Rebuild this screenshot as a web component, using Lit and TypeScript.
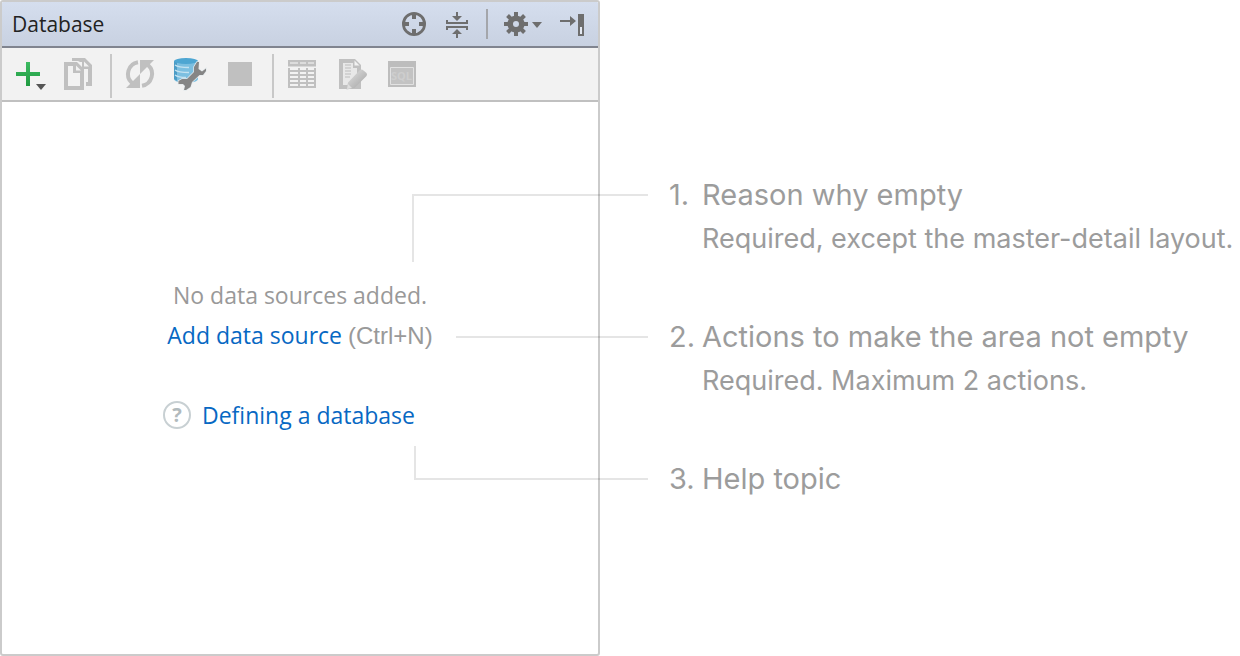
import { LitElement, html, css, svg } from "lit";
import { customElement } from "lit/decorators.js";

const gearTeeth = [0, 45, 90, 135, 180, 225, 270, 315];

const icons = {
  locate: html`<svg width="28" height="28" viewBox="0 0 28 28" aria-hidden="true">
    <circle cx="14" cy="14" r="10.6" fill="none" stroke="#6e6e6e" stroke-width="2.8" />
    <path d="M12 3h4v6h-4zM12 19h4v6h-4zM3 12h6v4H3zM19 12h6v4h-6z" fill="#6e6e6e" />
  </svg>`,
  collapse: html`<svg width="28" height="28" viewBox="0 0 28 28" aria-hidden="true">
    <path
      d="M13 2h2v4h4l-5 5-5-5h4zM3 10h2v2h18v-2h2v4H3zM3 16h22v4h-2v-2H5v2H3zM14 19l5 5h-4v4h-2v-4H9z"
      fill="#6e6e6e"
    />
  </svg>`,
  gear: html`<svg width="40" height="28" viewBox="0 0 40 28" aria-hidden="true">
    ${gearTeeth.map(
      (a) => svg`<path d="M11 2h4v6h-4z" fill="#6e6e6e" transform="rotate(${a} 13 14)" />`
    )}
    <circle cx="13" cy="14" r="5.8" fill="none" stroke="#6e6e6e" stroke-width="5.6" />
    <path d="M29 12h10l-5 6z" fill="#6e6e6e" />
  </svg>`,
  hide: html`<svg width="28" height="28" viewBox="0 0 28 28" aria-hidden="true">
    <path d="M2 10h10V6l6 5-6 5v-4H2z" fill="#6e6e6e" />
    <path d="M20 4h6v22h-6z" fill="#6e6e6e" />
    <path d="M22 17h2v7h-2z" fill="#e4e9f2" />
  </svg>`,
  add: html`<svg width="32" height="32" viewBox="0 0 32 32" aria-hidden="true">
    <defs>
      <linearGradient id="plus" x1="0" y1="0" x2="0" y2="1">
        <stop offset="0" stop-color="#3dbb62" />
        <stop offset="1" stop-color="#1f9a41" />
      </linearGradient>
    </defs>
    <path d="M14 4h4v10h10v4H18v10h-4V18H4v-4h10z" fill="url(#plus)" />
    <path d="M24 26h10l-5 6z" fill="#555" />
  </svg>`,
  copy: html`<svg width="32" height="32" viewBox="0 0 32 32" aria-hidden="true">
    <path d="M10 0h13l7 7v21h-6v-4h2V11h-6V4h-2L16 3h-6z" fill="#c0c0c0" />
    <path d="M22 3.500v5h5z" fill="#f2f2f2" />
    <path
      fill-rule="evenodd"
      d="M2 4h13l7 7v21H2zM6 8v20h12V15h-7V8z"
      fill="#c0c0c0"
    />
    <path d="M14 7.500v5h5z" fill="#f2f2f2" />
  </svg>`,
  refresh: html`<svg width="32" height="32" viewBox="0 0 32 32" aria-hidden="true">
    <path
      d="M14 4.200A12 12 0 0 0 8 25M18 27.800A12 12 0 0 0 24 7"
      fill="none"
      stroke="#c0c0c0"
      stroke-width="4"
    />
    <path d="M16 2h14L16 16zM16 30H2l14-14z" fill="#c0c0c0" />
  </svg>`,
  properties: html`<svg width="32" height="32" viewBox="0 0 32 32" aria-hidden="true">
    <path d="M0 3v18c0 2 5 4 12 4s12-2 12-4V3z" fill="#7cbfe0" />
    <path d="M0 3v18l3 2V4z" fill="#4c9cc6" />
    <path
      d="M1 7c2 1.500 6 2.500 14 2.500M1 12c2 1.500 6 2.500 14 2.500M1 17c2 1.500 6 2.500 11 2.500"
      stroke="#c4e2f0"
      stroke-width="1.300"
      fill="none"
    />
    <ellipse cx="12" cy="3" rx="12" ry="3" fill="#4ea6d2" />
    <path
      d="M25 4h-2l-3 5v5l-7 7H8l-3.500 2v3H9l2 2-1 4h2l4.500-3 1.500-5 7.500-7H29l3-4v-2.500L28 13.500 24.500 11z"
      fill="#858585"
      stroke="#e4eaed"
      stroke-width="1.400"
      paint-order="stroke"
    />
  </svg>`,
  stop: html`<svg width="32" height="32" viewBox="0 0 32 32" aria-hidden="true">
    <path d="M4 4h24v24H4z" fill="#c0c0c0" />
  </svg>`,
  table: html`<svg width="32" height="32" viewBox="0 0 32 32" aria-hidden="true">
    <path d="M2 2h28v28H2z" fill="#c0c0c0" />
    <path d="M4 4h8v2H4zM14 4h6v2h-6zM22 4h6v2h-6z" fill="#dcdcdc" />
    <path d="M2 8.500h28V10H2z" fill="#f2f2f2" />
    ${[10, 14, 18, 22, 26].map(
      (y) => svg`<path d="M4 ${y}h8v2H4zM14 ${y}h6v2h-6zM22 ${y}h6v2h-6z" fill="#f2f2f2" />`
    )}
  </svg>`,
  edit: html`<svg width="32" height="32" viewBox="0 0 32 32" aria-hidden="true">
    <defs>
      <linearGradient id="pencil" x1="0" y1="0" x2="1" y2="1">
        <stop offset="0.300" stop-color="#d0d0d0" />
        <stop offset="0.700" stop-color="#b4b4b4" />
      </linearGradient>
    </defs>
    <path d="M3 1h16l6 6v24H3z" fill="#c0c0c0" />
    <path d="M7 5h10v5h4v17H7z" fill="#e8e8e8" />
    <path d="M18.500 2.500v5h5z" fill="#f2f2f2" />
    <path d="M9 7h6M9 10h6M9 13h6M9 16h6M9 19h5" stroke="#bcbcbc" stroke-width="1.200" />
    <path
      d="M10.500 31.500l1.500-7L24 12q2-1 3.500.500l3 2.500q1 1.500 0 3L18.500 30z"
      fill="url(#pencil)"
    />
    <path d="M11 31l1-5 4 4z" fill="#dedede" />
  </svg>`,
  console: html`<svg width="32" height="32" viewBox="0 0 32 32" aria-hidden="true">
    <path d="M2 3h28v26H2z" fill="#bdbdbd" />
    <path d="M4.500 9.500h23v17h-23z" fill="#c3c3c3" stroke="#e2e2e2" />
    <text x="15.500" y="22" text-anchor="middle" class="sql">SQL</text>
  </svg>`,
  help: html`<svg width="28" height="28" viewBox="0 0 28 28" aria-hidden="true">
    <circle cx="14" cy="14" r="13" fill="none" stroke="#c8d0d3" stroke-width="2" />
    <text x="14" y="21" text-anchor="middle" class="mark">?</text>
  </svg>`,
};

@customElement("app-root")
export class AppRoot extends LitElement {
  static styles = css`
    :host {
      display: grid;
      grid-template-columns: minmax(0, 600fr) minmax(0, 640fr);
      min-height: 100vh;
      background: #fff;
      overflow: hidden;
      font-family: "Open Sans", "Noto Sans", sans-serif;
    }
    .panel {
      display: flex;
      flex-direction: column;
      border: 2px solid #cbcbcb;
      border-radius: 3px;
      overflow: hidden;
    }
    .header {
      display: flex;
      align-items: center;
      gap: 15px;
      height: 44px;
      padding: 0 12px 0 10px;
      background: linear-gradient(#d5deee, #c8d1e1);
      border-bottom: 2px solid #80848f;
    }
    h1 {
      flex: 1;
      margin: 0;
      font-size: 21px;
      line-height: 44px;
      font-weight: 400;
      color: #222;
    }
    button {
      display: block;
      padding: 0;
      border: 0;
      background: none;
    }
    svg {
      display: block;
      overflow: visible;
    }
    .rule {
      width: 2px;
      height: 30px;
      background: #a4a6ab;
    }
    .toolbar {
      display: flex;
      align-items: center;
      height: 52px;
      padding-left: 10px;
      background: #f2f2f2;
      border-bottom: 2px solid #c0c0c0;
    }
    .group {
      display: flex;
      gap: 18px;
    }
    .divider {
      width: 2px;
      align-self: stretch;
      margin: 6px 12px 2px 16px;
      background: #c8c8c8;
    }
    .empty {
      flex: 1;
      display: flex;
      flex-direction: column;
      align-items: center;
      padding-top: 173px;
      font-size: 23px;
      line-height: 40px;
      color: #999;
    }
    .empty p {
      margin: 0;
    }
    .empty .help {
      display: flex;
      align-items: center;
      gap: 11px;
      margin-top: 39px;
      padding-right: 22px;
    }
    a {
      color: #0768c3;
      text-decoration: none;
    }
    .shortcut {
      font-family: "Liberation Sans", sans-serif;
      font-size: 24px;
    }
    .sql {
      font: 700 11px "Open Sans", sans-serif;
      fill: #cecece;
    }
    .mark {
      font: 700 20px "Open Sans", sans-serif;
      fill: #b1babd;
    }
    .notes {
      display: flex;
      flex-direction: column;
      gap: 54px;
      margin: 0;
      padding: 173px 0 0 69px;
      list-style: none;
      font-family: Inter, sans-serif;
      line-height: 44px;
      color: #9c9c9c;
      white-space: nowrap;
    }
    .note {
      position: relative;
      display: grid;
      grid-template-columns: 33px auto;
    }
    .number,
    h2 {
      margin: 0;
      font-size: 29px;
      font-weight: 400;
    }
    .note p {
      grid-column: 2;
      margin: 0;
      font-size: 27px;
    }
    .lead {
      position: absolute;
      right: 100%;
      margin-right: 21px;
      box-sizing: border-box;
      border: 0 solid rgba(0, 0, 0, 0.1);
    }
    .reason {
      top: 21px;
      width: 236px;
      height: 68px;
      border-width: 2px 0 0 2px;
    }
    .actions {
      top: 21px;
      width: 192px;
      border-top-width: 2px;
    }
    .topic {
      bottom: 21px;
      width: 234px;
      height: 34px;
      border-width: 0 0 2px 2px;
    }
  `;

  private notes = [
    { lead: "reason", title: "Reason why empty", text: "Required, except the master-detail layout." },
    { lead: "actions", title: "Actions to make the area not empty", text: "Required. Maximum 2 actions." },
    { lead: "topic", title: "Help topic", text: "" },
  ];

  private button(label: string, icon: unknown, disabled = false) {
    return html`<button type="button" aria-label=${label} ?disabled=${disabled}>${icon}</button>`;
  }

  render() {
    return html`
      <section class="panel">
        <header class="header">
          <h1>Database</h1>
          ${this.button("Locate", icons.locate)} ${this.button("Collapse all", icons.collapse)}
          <span class="rule"></span>
          ${this.button("Settings", icons.gear)} ${this.button("Hide", icons.hide)}
        </header>
        <div class="toolbar" role="toolbar">
          <div class="group">
            ${this.button("Add", icons.add)} ${this.button("Duplicate", icons.copy, true)}
          </div>
          <span class="divider"></span>
          <div class="group">
            ${this.button("Refresh", icons.refresh, true)}
            ${this.button("Properties", icons.properties)} ${this.button("Stop", icons.stop, true)}
          </div>
          <span class="divider"></span>
          <div class="group">
            ${this.button("Open table", icons.table, true)} ${this.button("Edit", icons.edit, true)}
            ${this.button("Console", icons.console, true)}
          </div>
        </div>
        <div class="empty">
          <p>No data sources added.</p>
          <p><a href="#add">Add data source</a> <span class="shortcut">(Ctrl+N)</span></p>
          <p class="help">${icons.help}<a href="#help">Defining a database</a></p>
        </div>
      </section>
      <ol class="notes">
        ${this.notes.map(
          (n, i) => html`<li class="note">
            <span class="lead ${n.lead}"></span>
            <span class="number">${i + 1}.</span>
            <h2>${n.title}</h2>
            ${n.text ? html`<p>${n.text}</p>` : ""}
          </li>`
        )}
      </ol>
    `;
  }
}
